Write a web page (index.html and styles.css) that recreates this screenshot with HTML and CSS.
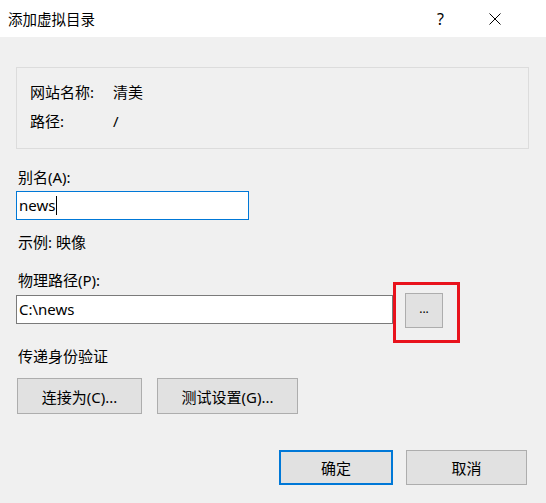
FILE: index.html
```html
<!DOCTYPE html>
<html lang="zh-CN">
<head>
  <meta charset="UTF-8" />
  <title>添加虚拟目录</title>
  <link rel="stylesheet" href="styles.css">
</head>
<body>
  <div class="dialog">
    <div class="titlebar">
      <span class="title">添加虚拟目录</span>
      <span class="help">?</span>
      <span class="close">
        <svg width="12" height="12" viewBox="0 0 12 12">
          <path d="M0.5 0.5 L11.5 11.5 M11.5 0.5 L0.5 11.5" stroke="#000" stroke-width="1" fill="none"/>
        </svg>
      </span>
    </div>

    <div class="content">
      <div class="group">
        <span>网站名称:</span><span>清美</span>
        <span>路径:</span><span>/</span>
      </div>

      <div class="label gap-lg">别名(A):</div>
      <div class="field alias focused">news<span class="caret"></span></div>

      <div class="label gap-md">示例: 映像</div>

      <div class="label gap-lg">物理路径(P):</div>
      <div class="path-row">
        <div class="field path">C:\news</div>
        <span class="browse-wrap"><button class="btn browse">...</button></span>
      </div>

      <div class="label gap-lg">传递身份验证</div>
      <div class="auth-row">
        <button class="btn connect">连接为(C)...</button>
        <button class="btn test">测试设置(G)...</button>
      </div>

      <div class="actions">
        <button class="btn ok">确定</button>
        <button class="btn cancel">取消</button>
      </div>
    </div>
  </div>
</body>
</html>
```

FILE: styles.css
```css
body {
  margin: 0;
  background: #f0f0f0;
  font-family: "Noto Sans", "Noto Sans CJK SC", sans-serif;
  font-size: 15px;
  color: #000;
}
.dialog {
  width: 546px;
  height: 503px;
  overflow: hidden;
}
.titlebar {
  height: 37px;
  background: #fff;
  display: flex;
  align-items: center;
}
.title {
  margin-left: 8px;
  flex: 1;
  font-size: 14.5px;
}
.help {
  font-size: 16px;
  margin-right: 45px;
}
.close {
  display: flex;
  margin-right: 45px;
}
.content {
  padding: 30px 0 0 16px;
}
.group {
  width: 498px;
  height: 70px;
  border: 1px solid #dcdcdc;
  padding: 10px 0 0 13px;
  display: grid;
  grid-template-columns: 83px 1fr;
  grid-auto-rows: 29px;
  line-height: 29px;
}
.label {
  line-height: 20px;
  padding-left: 2px;
}
.gap-lg {
  margin-top: 18px;
}
.gap-md {
  margin-top: 12px;
}
.field {
  box-sizing: border-box;
  height: 29px;
  background: #fff;
  border: 1px solid #7a7a7a;
  line-height: 27px;
  padding-left: 2px;
}
.alias {
  width: 233px;
  margin-top: 4px;
  display: flex;
}
.focused {
  border-color: #0078d7;
}
.caret {
  width: 1px;
  height: 19px;
  background: #000;
  margin: 4px 0 0 1px;
}
.path-row {
  display: flex;
  align-items: flex-start;
  margin-top: 3px;
}
.path {
  width: 377px;
  margin-top: 2px;
}
.btn {
  font: inherit;
  color: #000;
  background: #e1e1e1;
  border: 1px solid #adadad;
  padding: 0;
  height: 36px;
}
.browse-wrap {
  position: relative;
  margin-left: 12px;
  display: flex;
}
.browse {
  width: 38px;
  height: 35px;
  font-size: 12px;
  padding-bottom: 4px;
}
/* red marker frame around the browse button */
.browse-wrap::after {
  content: "";
  position: absolute;
  top: -11px;
  left: -12px;
  right: -17px;
  bottom: -15px;
  border: 3px solid #e8121c;
}
.auth-row {
  display: flex;
  gap: 15px;
  margin-top: 12px;
  padding-left: 1px;
}
.connect {
  width: 125px;
}
.test {
  width: 141px;
}
.actions {
  display: flex;
  justify-content: flex-end;
  gap: 13px;
  margin-top: 36px;
  padding-right: 19px;
}
.ok {
  width: 114px;
  height: 35px;
  border: 2px solid #0078d7;
}
.cancel {
  width: 121px;
  height: 35px;
}
```
